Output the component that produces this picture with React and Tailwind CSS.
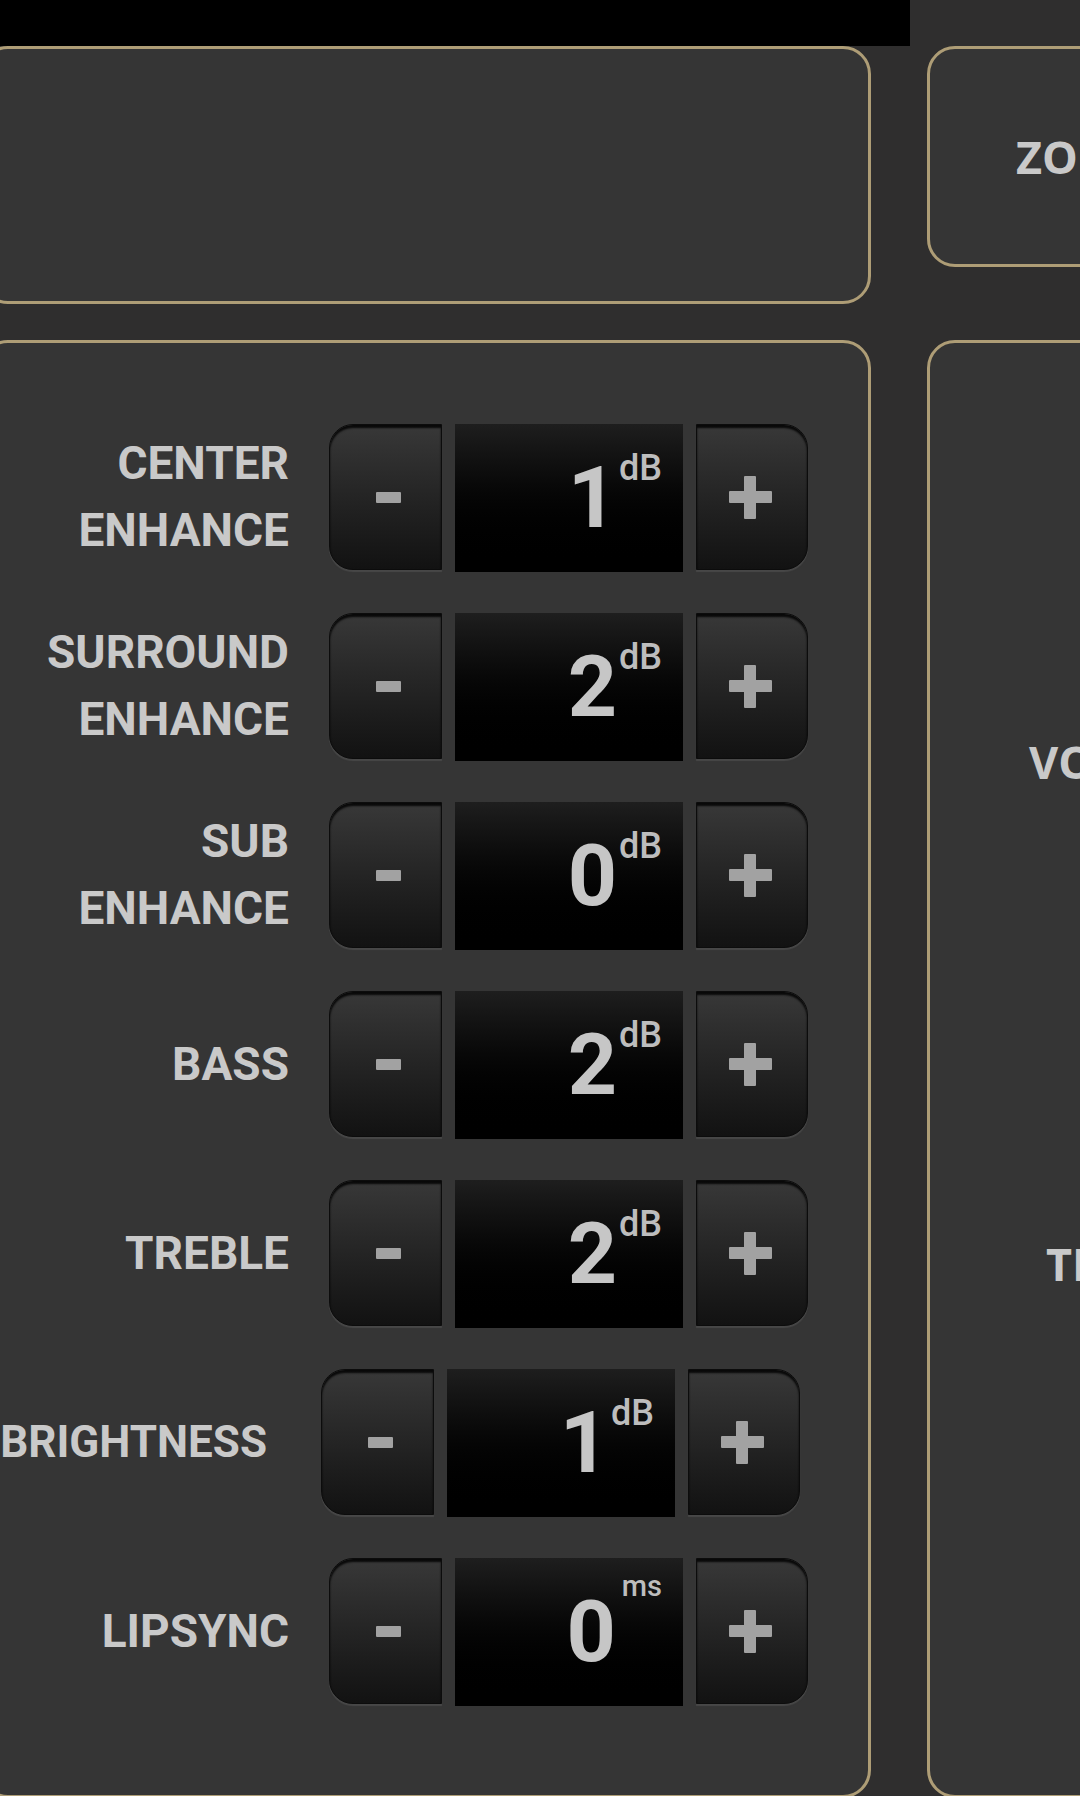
import React from "react";

const rows = [
  { label: ["CENTER", "ENHANCE"], value: "1", unit: "dB" },
  { label: ["SURROUND", "ENHANCE"], value: "2", unit: "dB" },
  { label: ["SUB", "ENHANCE"], value: "0", unit: "dB" },
  { label: ["BASS"], value: "2", unit: "dB" },
  { label: ["TREBLE"], value: "2", unit: "dB" },
  { label: ["BRIGHTNESS"], value: "1", unit: "dB", shifted: true },
  { label: ["LIPSYNC"], value: "0", unit: "ms" },
];

function Row({ label, value, unit, shifted }) {
  return (
    <div className="flex items-start h-[148px] shrink-0">
      <div
        className={
          shifted
            ? "w-[306px] h-[146px] flex items-center justify-end pr-[22px] text-right"
            : "w-[306px] h-[146px] flex items-center justify-end text-right"
        }
      >
        <div
          className={
            shifted
              ? "text-[44px] leading-[67px] font-bold text-[#c9c9c9] whitespace-nowrap"
              : "text-[46px] leading-[67px] font-bold text-[#c9c9c9] whitespace-nowrap"
          }
        >
          {label.map((l) => (
            <div key={l}>{l}</div>
          ))}
        </div>
      </div>
      <div
        className={
          shifted
            ? "ml-[32px] w-[113px] h-[146px] rounded-l-[24px] border border-[#0c0c0c] bg-linear-to-b from-[#383838] to-[#121212] shadow-[inset_0_3px_2px_rgba(0,0,0,0.85),0_2px_1px_rgba(90,90,90,0.5)] flex items-center justify-center pl-[5px]"
            : "ml-[40px] w-[113px] h-[146px] rounded-l-[24px] border border-[#0c0c0c] bg-linear-to-b from-[#383838] to-[#121212] shadow-[inset_0_3px_2px_rgba(0,0,0,0.85),0_2px_1px_rgba(90,90,90,0.5)] flex items-center justify-center pl-[5px]"
        }
      >
        <div className="w-[25px] h-[11px] bg-[#a2a2a2] rounded-[1px]" />
      </div>
      <div className="ml-[13px] w-[228px] h-[148px] bg-linear-to-b from-[#1e1e1e] to-[#000000] flex items-center justify-end pr-[21px]">
        <span className="text-[86px] leading-none font-bold text-[#c6c6c6]">{value}</span>
        {unit === "ms" ? (
          <span className="self-start mt-[14px] ml-[6px] text-[29px] leading-none font-medium text-[#bdbdbd]">
            {unit}
          </span>
        ) : (
          <span className="self-start mt-[26px] ml-[2px] text-[36px] leading-none font-medium text-[#bdbdbd]">
            {unit}
          </span>
        )}
      </div>
      <div className="ml-[13px] w-[112px] h-[146px] rounded-r-[24px] border border-[#0c0c0c] bg-linear-to-b from-[#383838] to-[#121212] shadow-[inset_0_3px_2px_rgba(0,0,0,0.85),0_2px_1px_rgba(90,90,90,0.5)] flex items-center justify-center pr-[4px]">
        <div className="relative w-[43px] h-[43px]">
          <div className="absolute left-0 top-[15px] w-[43px] h-[12px] bg-[#a2a2a2] rounded-[1px]" />
          <div className="absolute top-0 left-[15px] w-[12px] h-[43px] bg-[#a2a2a2] rounded-[1px]" />
        </div>
      </div>
    </div>
  );
}

export default function App() {
  return (
    <div className="w-[1080px] h-[1796px] overflow-hidden bg-[#2f2e2e] font-['Roboto',sans-serif]">
      <div className="h-[46px] w-[910px] bg-black" />
      <div className="flex gap-[56px] -ml-[20px]">
        <div className="w-[891px] shrink-0 flex flex-col gap-[36px]">
          <div className="h-[258px] rounded-[28px] border-[3px] border-[#ae9d76] bg-[#353535]" />
          <div className="h-[1458px] rounded-[28px] border-[3px] border-[#ae9d76] bg-[#353535] pt-[81px] flex flex-col gap-[41px]">
            {rows.map((r) => (
              <Row key={r.label.join(" ")} {...r} />
            ))}
          </div>
        </div>
        <div className="w-[420px] shrink-0 flex flex-col font-['Open_Sans',sans-serif] font-bold text-[45px] leading-none text-[#c9c9c9]">
          <div className="h-[221px] rounded-[28px] border-[3px] border-[#ae9d76] bg-[#353535] flex items-center pl-[86px]">
            ZONE
          </div>
          <div className="mt-[73px] h-[1458px] rounded-[28px] border-[3px] border-[#ae9d76] bg-[#353535] pt-[396px] flex flex-col">
            <div className="pl-[99px] whitespace-nowrap">VOLUME</div>
            <div className="mt-[457px] pl-[116px] whitespace-nowrap">TIME</div>
          </div>
        </div>
      </div>
    </div>
  );
}
